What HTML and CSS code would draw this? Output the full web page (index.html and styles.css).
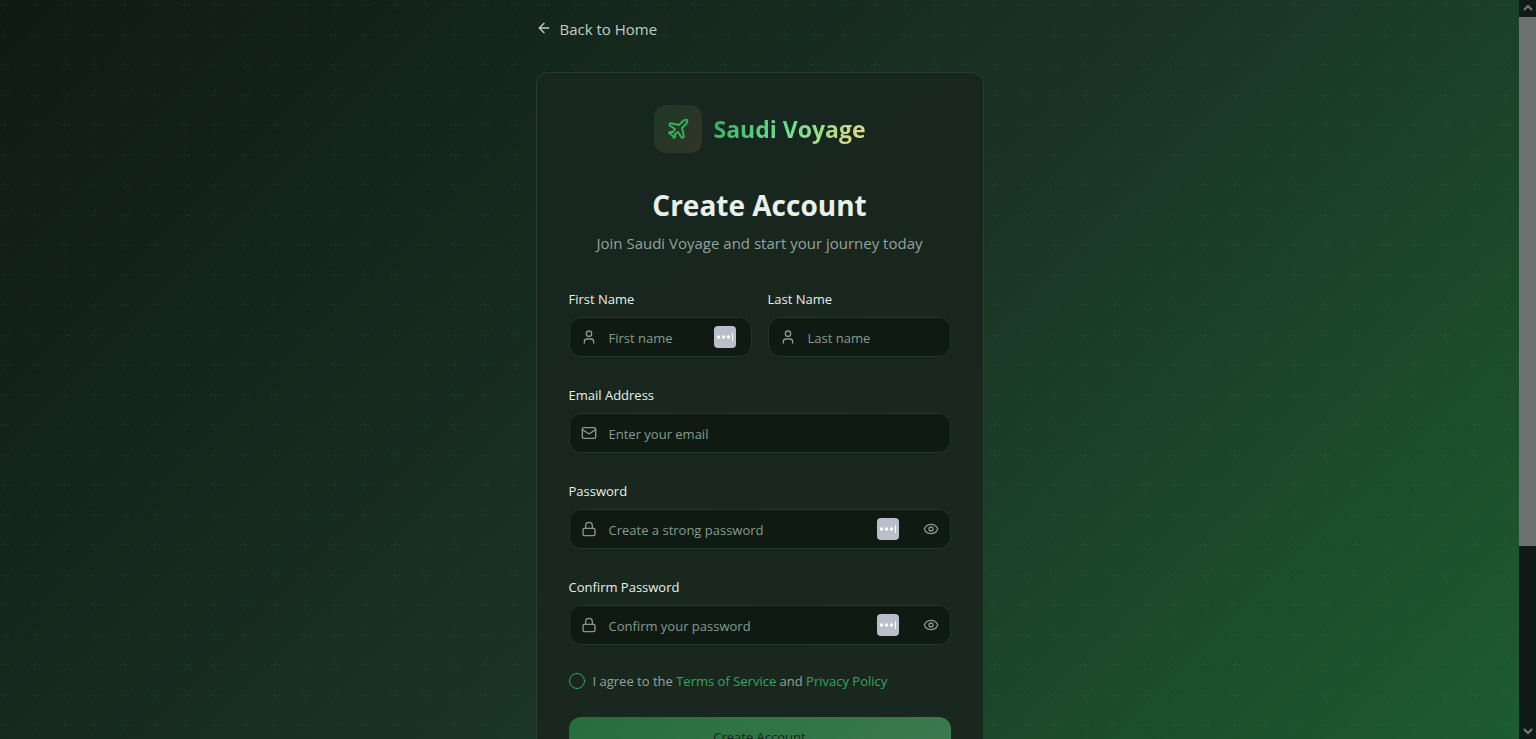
FILE: index.html
```html
<!DOCTYPE html>
<html lang="en">
<head>
    <meta charset="UTF-8">
    <meta name="viewport" content="width=device-width, initial-scale=1.0">
    <title>Saudi Voyage - Create Account</title>
    <link rel="stylesheet" href="styles.css">
</head>
<body>

    <!-- shared icons -->
    <svg class="sprite" aria-hidden="true">
        <symbol id="user" viewBox="0 0 24 24"><path d="M19 21v-2a4 4 0 0 0-4-4H9a4 4 0 0 0-4 4v2"/><circle cx="12" cy="7" r="4"/></symbol>
        <symbol id="mail" viewBox="0 0 24 24"><rect width="20" height="16" x="2" y="4" rx="2"/><path d="m22 7-8.97 5.7a1.94 1.94 0 0 1-2.06 0L2 7"/></symbol>
        <symbol id="lock" viewBox="0 0 24 24"><rect width="18" height="11" x="3" y="11" rx="2"/><path d="M7 11V7a5 5 0 0 1 10 0v4"/></symbol>
        <symbol id="eye" viewBox="0 0 24 24"><path d="M2.06 12.35a1 1 0 0 1 0-.7 10.75 10.75 0 0 1 19.88 0 1 1 0 0 1 0 .7 10.75 10.75 0 0 1-19.88 0"/><circle cx="12" cy="12" r="3"/></symbol>
        <symbol id="fill" viewBox="0 0 22 22"><rect width="22" height="22" rx="4" fill="#b8bfca" stroke="none"/><g fill="#fff" stroke="none"><circle cx="4.500" cy="11" r="1.700"/><circle cx="9.500" cy="11" r="1.700"/><circle cx="14.500" cy="11" r="1.700"/><rect x="18" y="7" width="1" height="8"/></g></symbol>
    </svg>

    <main class="page">
        <div class="wrapper">
            <a href="#" class="back">
                <svg class="icon" viewBox="0 0 24 24"><path d="m12 19-7-7 7-7"/><path d="M19 12H5"/></svg>
                <span>Back to Home</span>
            </a>

            <section class="card">
                <header class="card-header">
                    <div class="brand">
                        <span class="brand-icon">
                            <svg class="icon" viewBox="0 0 24 24"><path d="M17.8 19.2 16 11l3.5-3.5C21 6 21.5 4 21 3c-1-.5-3 0-4.500 1.500L13 8 4.800 6.200c-.5-.1-.9.1-1.100.5l-.3.5c-.2.5-.1 1 .3 1.300L9 12l-2 3H4l-1 1 3 2 2 3 1-1v-3l3-2 3.500 5.300c.3.4.8.5 1.300.3l.5-.2c.4-.3.6-.7.5-1.200z"/></svg>
                        </span>
                        <span class="brand-name">Saudi Voyage</span>
                    </div>
                    <h1>Create Account</h1>
                    <p class="subtitle">Join Saudi Voyage and start your journey today</p>
                </header>

                <form class="form">
                    <div class="row">
                        <div class="field">
                            <label for="firstName">First Name</label>
                            <div class="control">
                                <svg class="icon"><use href="#user"/></svg>
                                <input id="firstName" type="text" placeholder="First name">
                                <svg class="autofill"><use href="#fill"/></svg>
                            </div>
                        </div>
                        <div class="field">
                            <label for="lastName">Last Name</label>
                            <div class="control">
                                <svg class="icon"><use href="#user"/></svg>
                                <input id="lastName" type="text" placeholder="Last name">
                            </div>
                        </div>
                    </div>

                    <div class="field">
                        <label for="email">Email Address</label>
                        <div class="control">
                            <svg class="icon"><use href="#mail"/></svg>
                            <input id="email" type="email" placeholder="Enter your email">
                        </div>
                    </div>

                    <div class="field">
                        <label for="password">Password</label>
                        <div class="control">
                            <svg class="icon"><use href="#lock"/></svg>
                            <input id="password" type="password" placeholder="Create a strong password">
                            <svg class="autofill"><use href="#fill"/></svg>
                            <button type="button" class="toggle" aria-label="Show password"><svg class="icon"><use href="#eye"/></svg></button>
                        </div>
                    </div>

                    <div class="field">
                        <label for="confirm">Confirm Password</label>
                        <div class="control">
                            <svg class="icon"><use href="#lock"/></svg>
                            <input id="confirm" type="password" placeholder="Confirm your password">
                            <svg class="autofill"><use href="#fill"/></svg>
                            <button type="button" class="toggle" aria-label="Show password"><svg class="icon"><use href="#eye"/></svg></button>
                        </div>
                    </div>

                    <div class="terms">
                        <input id="terms" type="checkbox">
                        <label for="terms">I agree to the <a href="#">Terms of Service</a> and <a href="#">Privacy Policy</a></label>
                    </div>

                    <button type="submit" class="submit" disabled>Create Account</button>
                </form>
            </section>
        </div>
    </main>

    <div class="scrollbar" aria-hidden="true">
        <svg viewBox="0 0 17 17"><path d="m5 10 4-4 4 4"/></svg>
        <div class="track"><div class="thumb"></div></div>
        <svg viewBox="0 0 17 17"><path d="m5 7 4 4 4-4"/></svg>
    </div>

</body>
</html>
```
FILE: styles.css
```css
* {
    box-sizing: border-box;
}

body {
    display: flex;
    height: 100vh;
    margin: 0;
    overflow: hidden;
    background: #101a16;
    color: #e8f0eb;
    font-family: "Open Sans", "Noto Sans", sans-serif;
    font-size: 13px;
}

a {
    color: #2fa85a;
    text-decoration: none;
}

.sprite {
    position: absolute;
    width: 0;
    height: 0;
}

.icon {
    width: 16px;
    height: 16px;
    flex: none;
    fill: none;
    stroke: currentColor;
    stroke-width: 2;
    stroke-linecap: round;
    stroke-linejoin: round;
}

.page {
    flex: 1;
    height: max-content;
    padding: 16px 16px 64px;
    background:
        url("data:image/svg+xml,%3Csvg xmlns='http://www.w3.org/2000/svg' width='30' height='30'%3E%3Cpath d='M6 4V0H4v4H0v2h4v4h2V6h4V4H6z' fill='%2334b866' fill-opacity='.03'/%3E%3C/svg%3E"),
        linear-gradient(135deg, #0f1a13 0%, #1a3324 50%, #1d6031 100%);
}

.wrapper {
    max-width: 448px;
    margin: 0 auto;
}

.back {
    display: flex;
    align-items: center;
    gap: 8px;
    height: 24px;
    margin-bottom: 32px;
    color: #c3cdc6;
    font-size: 15px;
}

.back span,
.control input {
    padding: 2px 0 0;
}

.card {
    padding: 32px;
    border: 1px solid #2a3b30;
    border-radius: 12px;
    background: linear-gradient(145deg, #17261e, #1a271e);
}

.card-header {
    margin-bottom: 30px;
    text-align: center;
}

.brand {
    display: flex;
    align-items: center;
    justify-content: center;
    gap: 12px;
    margin-bottom: 34px;
}

.brand-icon {
    display: flex;
    align-items: center;
    justify-content: center;
    width: 48px;
    height: 48px;
    border-radius: 12px;
    background: linear-gradient(135deg, #1c3827, #333526);
    color: #34b05c;
}

.brand-icon .icon {
    width: 24px;
    height: 24px;
}

.brand-name {
    background: linear-gradient(135deg, #2fa85a, #6be08f 50%, #f5d783);
    background-clip: text;
    color: transparent;
    font-size: 23px;
    font-weight: 700;
}

h1 {
    margin: 0 0 8px;
    font-size: 28px;
    font-weight: 700;
    line-height: 36px;
}

.subtitle {
    margin: 0;
    color: #94a39a;
    font-size: 15px;
    line-height: 24px;
}

.form {
    display: flex;
    flex-direction: column;
    gap: 24px;
}

.row {
    display: grid;
    grid-template-columns: repeat(2, minmax(0, 1fr));
    gap: 16px;
}

.field label {
    display: block;
    margin-bottom: 4px;
    line-height: 28px;
}

.control {
    display: flex;
    align-items: center;
    gap: 12px;
    height: 40px;
    padding: 0 11px;
    border: 1px solid #23362b;
    border-radius: 12px;
    background: #0f1a13;
    color: #869a8e;
}

.control input {
    flex: 1;
    min-width: 0;
    border: 0;
    outline: 0;
    background: none;
    color: #e8f0eb;
    font: inherit;
}

.control input::placeholder {
    color: #869a8e;
}

.autofill {
    flex: none;
    width: 22px;
    height: 22px;
    margin-right: 4px;
}

.toggle {
    display: flex;
    margin-left: 8px;
    padding: 0;
    border: 0;
    background: none;
    color: inherit;
}

.terms {
    display: flex;
    align-items: center;
    gap: 8px;
    color: #94a39a;
    line-height: 24px;
}

.terms input {
    width: 16px;
    height: 16px;
    margin: 0;
    appearance: none;
    border: 1px solid #2fa85a;
    border-radius: 50%;
}

.submit {
    height: 40px;
    border: 0;
    border-radius: 12px;
    background: linear-gradient(135deg, #266d3c, #3c7a4e);
    color: #14291b;
    font: inherit;
}

.scrollbar {
    display: flex;
    flex-direction: column;
    width: 17px;
    background: #101a16;
}

.scrollbar svg {
    width: 17px;
    height: 17px;
    fill: none;
    stroke: #777b79;
    stroke-width: 2;
}

.track {
    flex: 1;
}

.thumb {
    height: 75%;
    background: #6d716f;
}
```
